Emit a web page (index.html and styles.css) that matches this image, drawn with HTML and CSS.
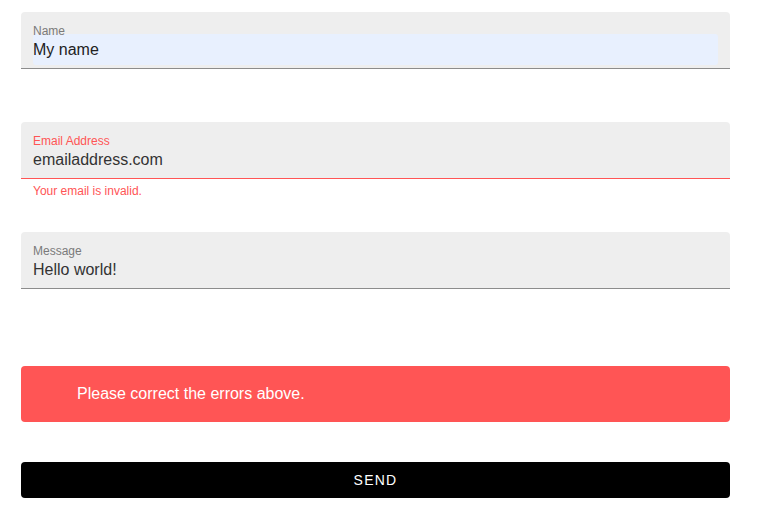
FILE: index.html
```html
<!DOCTYPE html>
<html lang="en">
<head>
<meta charset="utf-8">
<title>Contact form</title>
<link rel="stylesheet" href="styles.css">
</head>
<body>
<form class="form">
  <div class="group">
    <div class="field">
      <label class="label" for="name">Name</label>
      <input class="input input-autofill" id="name" type="text" value="My name">
    </div>
    <div class="helper"></div>
  </div>
  <div class="group">
    <div class="field field-error">
      <label class="label" for="email">Email Address</label>
      <input class="input" id="email" type="text" value="emailaddress.com">
    </div>
    <div class="helper helper-error">Your email is invalid.</div>
  </div>
  <div class="group">
    <div class="field">
      <label class="label" for="message">Message</label>
      <input class="input" id="message" type="text" value="Hello world!">
    </div>
  </div>
  <div class="banner">Please correct the errors above.</div>
  <button class="send" type="button">SEND</button>
</form>
</body>
</html>
```
FILE: styles.css
```css
html, body {
  margin: 0;
  padding: 0;
  background: #ffffff;
}
body {
  font-family: "Liberation Sans", Arial, sans-serif;
}
.form {
  width: 709px;
  margin: 0 0 0 21px;
  padding-top: 12px;
  display: flex;
  flex-direction: column;
}
.field {
  background: #eeeeee;
  border-radius: 4px 4px 0 0;
  border-bottom: 1px solid #8c8c8c;
  padding: 14px 12px 3px;
  display: flex;
  flex-direction: column;
}
.field-error {
  border-bottom-color: #ff5555;
}
.label {
  position: relative;
  z-index: 1;
  font-size: 12px;
  line-height: 10px;
  color: #7a7a7a;
}
.field-error .label {
  color: #ff5555;
}
.input {
  margin-top: -2px;
  height: 31px;
  border: none;
  outline: none;
  padding: 0;
  background: transparent;
  font-family: "Liberation Sans", Arial, sans-serif;
  font-size: 16px;
  color: #333333;
  border-radius: 3px;
  width: 100%;
  box-sizing: border-box;
}
.input-autofill {
  background: #e8f0fe;
  color: #222222;
}
.helper {
  height: 53px;
  box-sizing: border-box;
  padding: 5px 12px 0;
  font-size: 12px;
  line-height: 14px;
}
.helper-error {
  color: #ff5555;
}
.banner {
  margin-top: 77px;
  height: 56px;
  box-sizing: border-box;
  background: #ff5555;
  border-radius: 4px;
  color: #ffffff;
  font-size: 16px;
  padding-left: 56px;
  display: flex;
  align-items: center;
}
.send {
  margin-top: 40px;
  height: 36px;
  background: #000000;
  color: #ffffff;
  border: none;
  border-radius: 4px;
  font-family: "Liberation Sans", Arial, sans-serif;
  font-size: 14px;
  letter-spacing: 1.25px;
  padding: 0;
  cursor: pointer;
}
```
